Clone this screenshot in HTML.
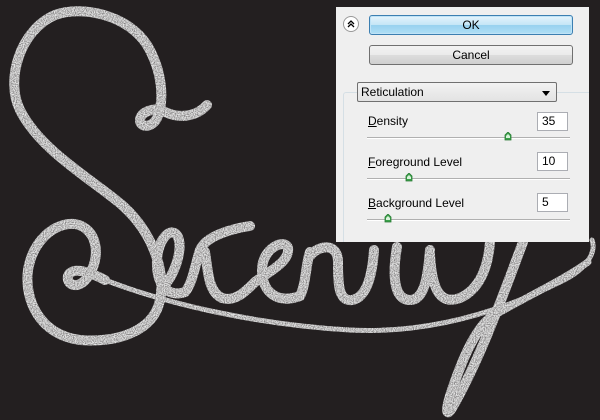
<!DOCTYPE html>
<html><head><meta charset="utf-8"><style>
body{margin:0;width:600px;height:420px;overflow:hidden;background:#231f20;font-family:"Liberation Sans",sans-serif;}
#art{position:absolute;left:0;top:0}
#panel{position:absolute;left:336px;top:7px;width:253px;height:235px;background:#efefef;overflow:hidden}
.btn{position:absolute;left:33px;width:202px;height:18px;border:1px solid #707070;border-radius:3px;font-size:12px;text-align:center;line-height:18px;color:#000;background:linear-gradient(#f2f2f2,#ebebeb 50%,#dddddd 51%,#cfcfcf);}
.ok{top:8px;border-color:#3c7fb1;background:linear-gradient(#e5f4fc,#c4e5f6 50%,#98d1ef 51%,#b0dff5);box-shadow:inset 0 0 0 1px #bfe3f7}
.circ{position:absolute;left:7px;top:9px;width:14px;height:14px;border-radius:50%;border:1px solid #999;background:#fff}
.grp{position:absolute;left:7px;top:85px;width:260px;height:160px;border-left:1px solid #d5dfe5;border-top:1px solid #d5dfe5;border-radius:3px 0 0 0}
.dd{position:absolute;left:21px;top:75px;border:1px solid #707070;border-radius:2px;background:linear-gradient(#f2f2f2,#e3e3e3);font-size:12px;line-height:19px;padding-left:3px;box-sizing:border-box;width:200px;height:20px}
.dd:after{content:"";position:absolute;right:6px;top:8px;border:4px solid transparent;border-top:5px solid #000}
.lbl{position:absolute;left:32px;font-size:12px;color:#000}
.in{position:absolute;left:201px;width:31px;height:19px;background:#fff;border:1px solid #abadb3;box-sizing:border-box;font-size:12px;line-height:17px;padding-left:4px}
.trk{position:absolute;left:31px;width:203px;height:1px;background:#b0b0b0;border-bottom:1px solid #fff}
.th{position:absolute;width:8px;height:9px}
</style></head><body>
<svg id="art" width="600" height="420" viewBox="0 0 600 420">
<defs><filter id="g"><feTurbulence type="fractalNoise" baseFrequency="0.9" numOctaves="1" result="n"/><feColorMatrix in="n" type="matrix" values="0 0 0 0 0.78 0 0 0 0 0.78 0 0 0 0 0.78 0 0 0 -1.4 1.5" result="m"/><feComposite in="m" in2="SourceGraphic" operator="in"/></filter></defs>
<g fill="none" stroke="#c0c0c0" stroke-linecap="round" filter="url(#g)">
<path stroke-width="10" d="M207,105 C195,118 178,118 165,112 C155,106 140,112 140,120 C140,128 152,128 157,118 C165,100 162,70 147,45 C128,15 82,5 55,15 C20,30 5,80 20,110 C40,150 90,178 122,205 C152,232 166,270 160,300 C154,330 120,343 80,340 C40,335 24,300 28,270 C33,240 55,222 75,224 C98,228 102,258 87,278 C78,290 66,285 68,276 C72,266 90,272 105,280"/>
<path stroke-width="5" d="M105,280 C170,305 260,325 350,330 C430,334 500,312 560,282 C590,268 596,250 592,240"/>
<path stroke-width="10" d="M162,288 C175,275 183,250 178,237 C172,225 158,238 157,260 C156,285 168,298 185,292 C192,285 196,262 200,250 M200,250 C205,238 225,230 250,226 M205,252 C208,270 208,292 222,298 C235,302 245,292 255,282 C268,272 290,262 288,248 C285,238 262,248 262,270 C262,293 278,304 300,296 C306,285 306,262 310,252 M310,256 C318,245 338,242 338,262 C338,282 338,302 352,300 C365,298 372,280 374,250 M397,247 C393,270 392,300 410,300 C425,300 428,275 430,250 M430,255 C432,290 440,305 460,298 C478,290 488,270 490,242 M523,242 C505,290 480,360 452,408 C446,418 445,410 452,390 C462,360 475,330 490,318"/>
<path stroke-width="7" d="M490,318 C520,300 560,282 588,262"/>
</g></svg>
<div id="panel">
<div class="circ"><svg width="14" height="14" viewBox="0 0 14 14"><path d="M4,7 L7,4 L10,7 M4,10 L7,7 L10,10" fill="none" stroke="#000" stroke-width="1.3"/></svg></div>
<div class="btn ok">OK</div>
<div class="btn" style="top:38px">Cancel</div>
<div class="grp"></div>
<div class="dd">Reticulation</div>
<div class="lbl" style="top:107px"><u>D</u>ensity</div>
<div class="in" style="top:105px">35</div>
<div class="trk" style="top:130px"></div>
<svg class="th" style="left:168px;top:125px" viewBox="0 0 8 9"><path d="M1,3 L4,0 L7,3 L7,8 L1,8Z" fill="#3aa24a" stroke="#2a7a35" stroke-width=".8"/><path d="M2,4 L4,2 L6,4 L6,6 L2,6Z" fill="#d8f2da"/></svg>
<div class="lbl" style="top:148px"><u>F</u>oreground Level</div>
<div class="in" style="top:145px">10</div>
<div class="trk" style="top:171px"></div>
<svg class="th" style="left:69px;top:166px" viewBox="0 0 8 9"><path d="M1,3 L4,0 L7,3 L7,8 L1,8Z" fill="#3aa24a" stroke="#2a7a35" stroke-width=".8"/><path d="M2,4 L4,2 L6,4 L6,6 L2,6Z" fill="#d8f2da"/></svg>
<div class="lbl" style="top:189px"><u>B</u>ackground Level</div>
<div class="in" style="top:186px">5</div>
<div class="trk" style="top:212px"></div>
<svg class="th" style="left:48px;top:207px" viewBox="0 0 8 9"><path d="M1,3 L4,0 L7,3 L7,8 L1,8Z" fill="#3aa24a" stroke="#2a7a35" stroke-width=".8"/><path d="M2,4 L4,2 L6,4 L6,6 L2,6Z" fill="#d8f2da"/></svg>
</div>
</body></html>
